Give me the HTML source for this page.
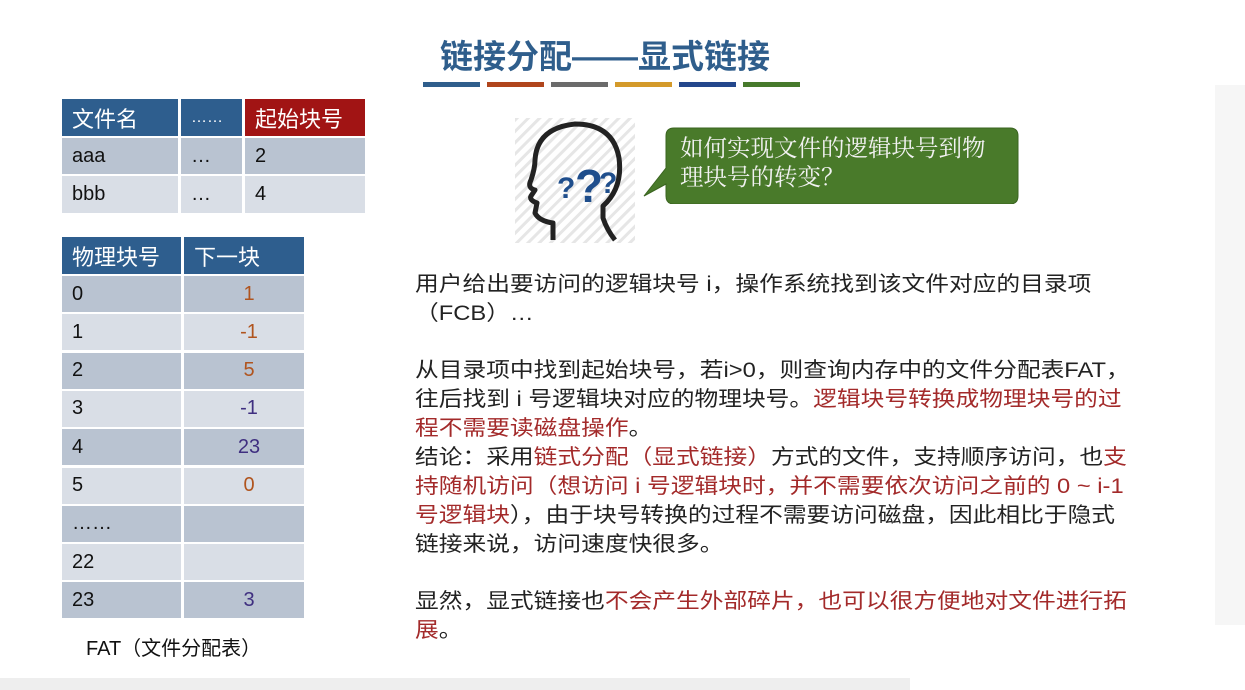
<!DOCTYPE html>
<html><head><meta charset="utf-8"><style>
body{margin:0;width:1245px;height:690px;background:#fff;position:relative;overflow:hidden;font-family:"Liberation Sans","Noto Sans CJK SC",sans-serif;}
.a{position:absolute;}
.c{position:absolute;box-sizing:border-box;padding-left:10px;font-size:20px;display:flex;align-items:center;color:#111;}
.h{background:#2e5e8e;color:#fff;font-size:22px;}
.d{background:#b9c3d1;}
.l{background:#d9dee6;}
.t{position:absolute;left:415px;font-size:21px;color:#222;line-height:29px;white-space:nowrap;transform:scaleX(1.13);transform-origin:0 0;}
.r{color:#a32a2a;}
</style></head><body>
<div class="a" style="right:0;top:85px;width:30px;height:540px;background:#f6f6f6"></div>
<div class="a" style="left:0;top:678px;width:910px;height:12px;background:#eeeeee"></div>
<div class="a" style="left:440px;top:30px;font-size:33px;font-weight:bold;color:#2f5e8c;">链接分配——显式链接</div>
<div class="a" style="left:423px;top:82px;width:57px;height:5px;background:#2f5e8c"></div>
<div class="a" style="left:487px;top:82px;width:57px;height:5px;background:#b0451c"></div>
<div class="a" style="left:551px;top:82px;width:57px;height:5px;background:#6b6b6b"></div>
<div class="a" style="left:615px;top:82px;width:57px;height:5px;background:#d49a2a"></div>
<div class="a" style="left:679px;top:82px;width:57px;height:5px;background:#23478c"></div>
<div class="a" style="left:743px;top:82px;width:57px;height:5px;background:#477a2c"></div>

<div class="c h" style="left:62px;top:99px;width:116px;height:37px">文件名</div>
<div class="c h" style="left:181px;top:99px;width:61px;height:37px;font-size:16px">……</div>
<div class="c h" style="left:245px;top:99px;width:120px;height:37px;background:#a11414">起始块号</div>
<div class="c d" style="left:62px;top:138px;width:116px;height:36px">aaa</div>
<div class="c d" style="left:181px;top:138px;width:61px;height:36px">…</div>
<div class="c d" style="left:245px;top:138px;width:120px;height:36px">2</div>
<div class="c l" style="left:62px;top:176px;width:116px;height:37px">bbb</div>
<div class="c l" style="left:181px;top:176px;width:61px;height:37px">…</div>
<div class="c l" style="left:245px;top:176px;width:120px;height:37px">4</div>

<div class="c h" style="left:62px;top:237px;width:119px;height:37px">物理块号</div>
<div class="c h" style="left:184px;top:237px;width:120px;height:37px">下一块</div>
<div id="t2"></div>
<script>
var rows=[["0","1","#b0541e"],["1","-1","#b0541e"],["2","5","#b0541e"],["3","-1","#3f2f80"],["4","23","#3f2f80"],["5","0","#b0541e"],["……","",""],["22","",""],["23","3","#3f2f80"]];
var h="";rows.forEach(function(r,i){var y=276+i*38.3,cl=i%2?"l":"d";
h+='<div class="c '+cl+'" style="left:62px;top:'+y+'px;width:119px;height:36px">'+r[0]+'</div>';
h+='<div class="c '+cl+'" style="left:184px;top:'+y+'px;width:120px;height:36px;justify-content:center;padding:0 0 0 10px;color:'+r[2]+'">'+r[1]+'</div>';});
document.getElementById("t2").outerHTML=h;
</script>
<div class="a" style="left:86px;top:632px;font-size:20px;color:#111">FAT（文件分配表）</div>

<svg class="a" style="left:515px;top:118px" width="120" height="125" viewBox="0 0 120 125">
<defs><pattern id="p" width="8" height="8" patternUnits="userSpaceOnUse" patternTransform="rotate(45)"><rect width="3" height="8" fill="#e6e6e6"/></pattern></defs>
<rect x="0" y="0" width="120" height="125" fill="url(#p)"/>
<path d="M38 122 L38 105 Q24 103 20 95 L22 85 Q14 82 16 78 L20 72 Q12 70 16 62 Q20 50 20 42 Q22 10 60 6 Q98 6 104 40 Q108 70 88 88 L88 100 Q92 112 100 122" fill="none" stroke="#222" stroke-width="5" stroke-linejoin="round"/>
<text x="42" y="80" font-size="30" font-weight="bold" fill="#1f4e8c" font-family="Liberation Sans">?</text>
<text x="60" y="84" font-size="46" font-weight="bold" fill="#1f4e8c" font-family="Liberation Sans">?</text>
<text x="84" y="75" font-size="30" font-weight="bold" fill="#1f4e8c" font-family="Liberation Sans">?</text>
</svg>
<svg class="a" style="left:640px;top:124px" width="380" height="80" viewBox="0 0 380 80">
<path d="M34 4 H370 Q378 4 378 12 V72 Q378 80 370 80 H34 Q26 80 26 72 V60 L4 72 L26 44 V12 Q26 4 34 4Z" fill="#497a2a" stroke="#3a6420"/>
</svg>
<div class="a" style="left:680px;top:135px;font-size:23.5px;line-height:29px;color:#f2f2f2;font-family:'Liberation Serif','Noto Serif CJK SC',serif">如何实现文件的逻辑块号到物<br>理块号的转变？</div>

<div class="t" style="top:270px">用户给出要访问的逻辑块号 i，操作系统找到该文件对应的目录项</div>
<div class="t" style="top:299px">（FCB）…</div>
<div class="t" style="top:356px">从目录项中找到起始块号，若i&gt;0，则查询内存中的文件分配表FAT，</div>
<div class="t" style="top:385px">往后找到 i 号逻辑块对应的物理块号。<span class="r">逻辑块号转换成物理块号的过</span></div>
<div class="t" style="top:414px"><span class="r">程不需要读磁盘操作</span>。</div>
<div class="t" style="top:443px">结论：采用<span class="r">链式分配（显式链接）</span>方式的文件，支持顺序访问，也<span class="r">支</span></div>
<div class="t" style="top:472px"><span class="r">持随机访问（想访问 i 号逻辑块时，并不需要依次访问之前的 0 ~ i-1</span></div>
<div class="t" style="top:501px"><span class="r">号逻辑块</span>），由于块号转换的过程不需要访问磁盘，因此相比于隐式</div>
<div class="t" style="top:530px">链接来说，访问速度快很多。</div>
<div class="t" style="top:587px">显然，显式链接也<span class="r">不会产生外部碎片，也可以很方便地对文件进行拓</span></div>
<div class="t" style="top:616px"><span class="r">展</span>。</div>
</body></html>
